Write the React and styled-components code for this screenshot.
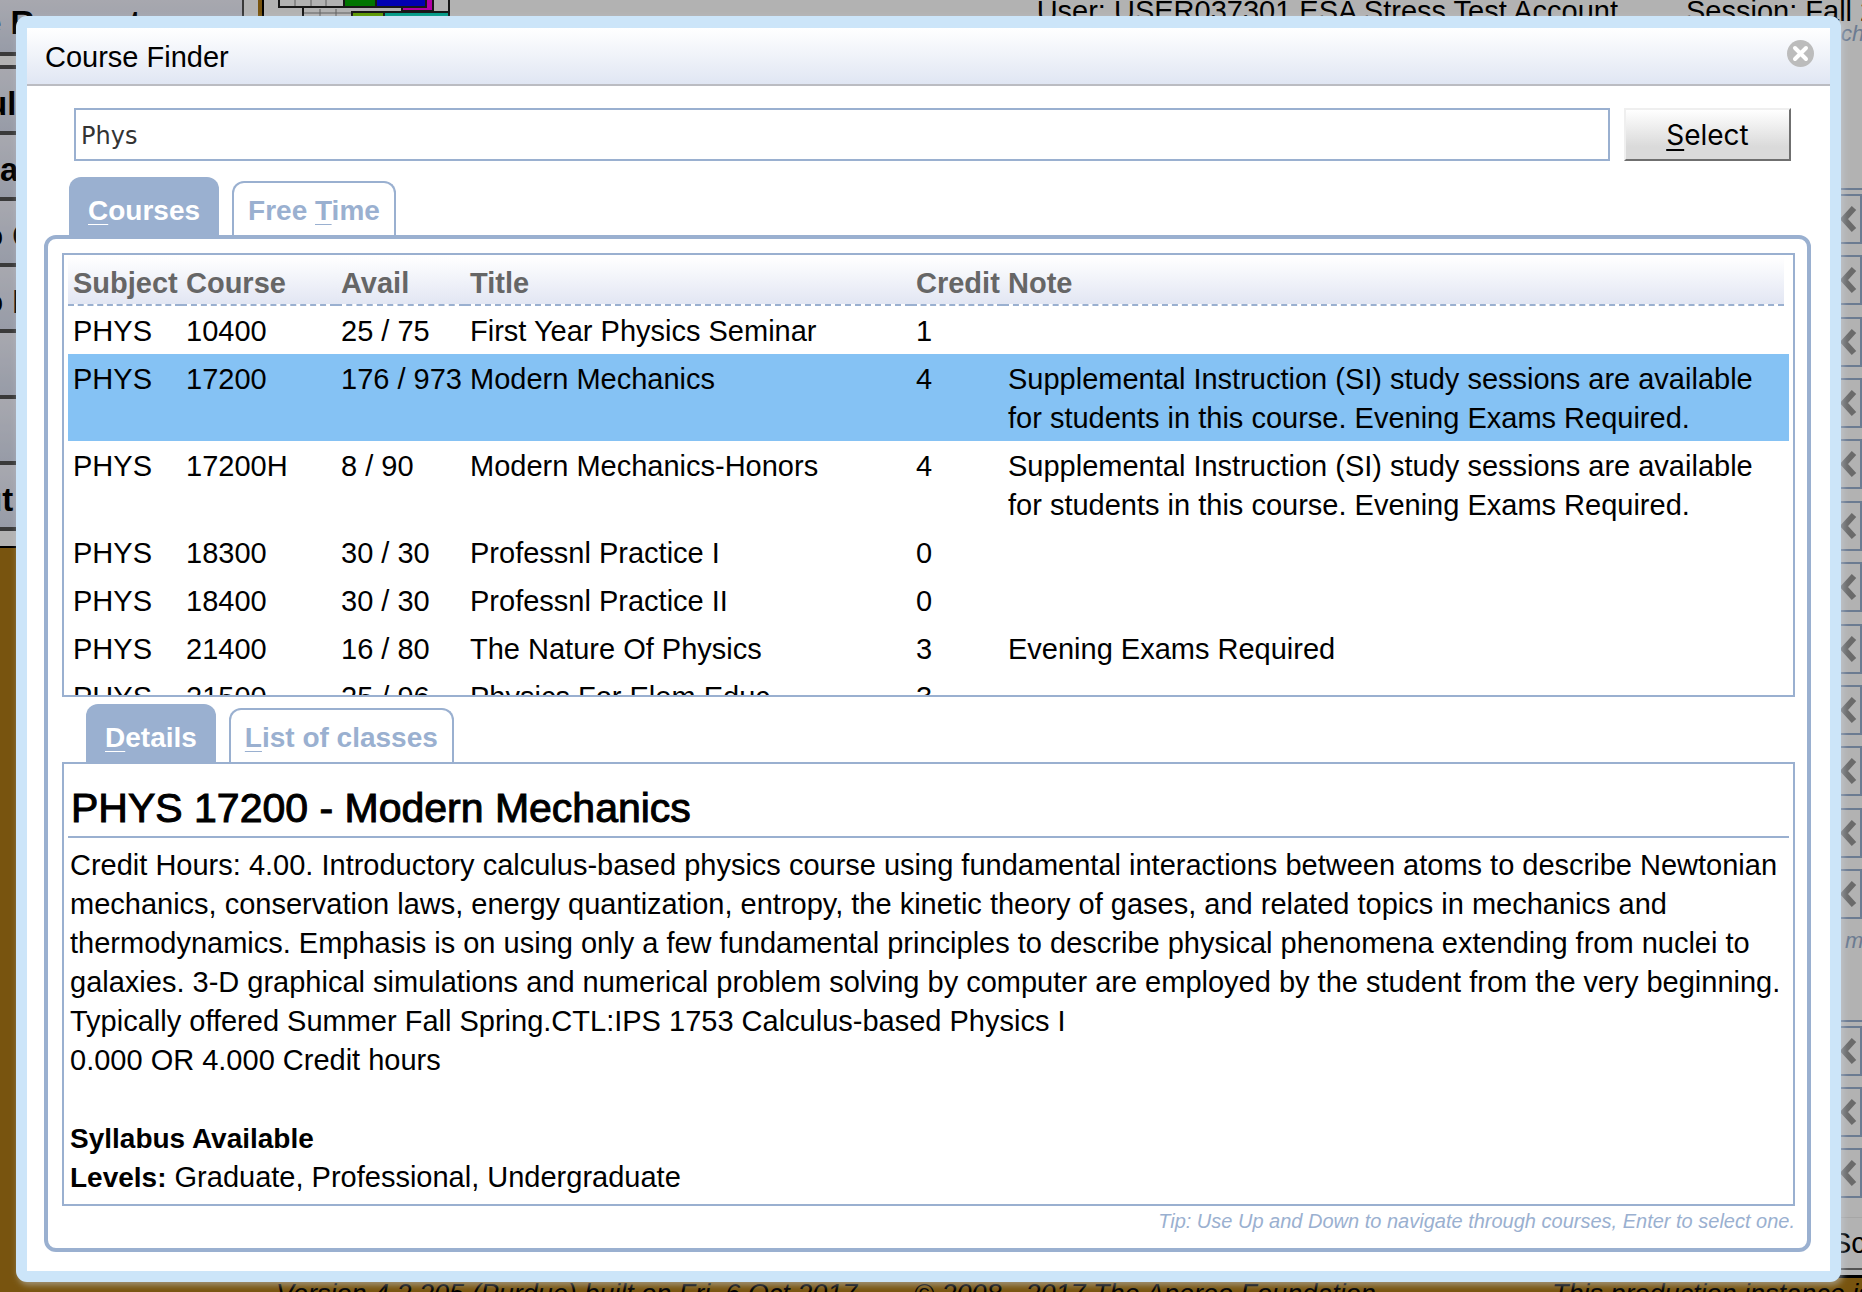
import React, { useState } from "react";
import styled, { createGlobalStyle } from "styled-components";

const blue = "#9ab0d0";
const sans = `"Liberation Sans", Arial, Helvetica, sans-serif`;

const GlobalStyle = createGlobalStyle`
  *, *::before, *::after { box-sizing: border-box; }
  body {
    margin: 0;
    height: 100vh;
    overflow: hidden;
    background: #ac7916;
    font: 29px/39px ${sans};
    color: #000;
  }
  button, input { font-family: inherit; color: inherit; margin: 0; }
`;

/* ---------- page behind the dialog ---------- */

const Page = styled.div`
  display: flex;
  height: 100vh;
  overflow: hidden;
`;

const Sidebar = styled.nav`
  flex: none;
  width: 258px;
  height: 548px;
  overflow: hidden;
  background: #fff;
  border-bottom: 2px solid #000;
`;

const MenuGroup = styled.div`
  width: 304px;
  margin: 0 0 9px -60px;
  border-right: 2px solid #535353;
`;

const MenuButton = styled.button`
  display: block;
  width: 100%;
  height: ${(p) => (p.$first ? 56 : p.$top ? 70 : 66)}px;
  padding: ${(p) => (p.$first ? "0 0 7px" : "7px 0 0")};
  padding-left: ${(p) => p.$start}px;
  border: 0 solid #535353;
  border-bottom-width: 4px;
  border-top-width: ${(p) => (p.$top ? 4 : 0)}px;
  background: linear-gradient(#f0f1fb, #d9dff0);
  font-size: 33px;
  font-weight: 700;
  line-height: 40px;
  text-align: left;
  white-space: nowrap;
`;

const Content = styled.div`
  flex: 1;
  min-width: 0;
  display: flex;
  flex-direction: column;
  margin-left: 4px;
`;

const Sheet = styled.main`
  flex: none;
  display: flex;
  flex-direction: column;
  padding: 0 0 5px 14px;
  background: #fff;
  border: 2px solid #000;
  border-width: 0 0 3px 2px;
`;

const Banner = styled.header`
  display: flex;
  align-items: flex-start;
  height: 22px;
  white-space: nowrap;
`;

const Logo = styled.svg`
  flex: none;
  display: block;
`;

const UserName = styled.span`
  margin: -8px 68px 0 auto;
`;

const Session = styled.span`
  flex: none;
  width: 176px;
  margin-top: -8px;
  overflow: hidden;
`;

const SideNote = styled.p`
  align-self: flex-end;
  width: ${(p) => p.$width}px;
  height: 24px;
  margin: ${(p) => p.$above || 0}px 0 0;
  overflow: hidden;
  color: ${blue};
  font-size: 22px;
  line-height: 24px;
  font-style: italic;
  white-space: nowrap;
`;

const RequestList = styled.section`
  display: flex;
  flex-direction: column;
  align-items: flex-end;
  justify-content: space-between;
  height: ${(p) => p.$height}px;
  margin-top: ${(p) => p.$above}px;
  padding-top: 4px;
  border-top: 2px solid ${blue};
`;

const MoveButton = styled.button`
  display: flex;
  align-items: center;
  justify-content: flex-end;
  width: 60px;
  height: 50px;
  padding: 0 3px 0 0;
  border: 2px solid ${blue};
  background: #fff;
`;

const NextSection = styled.div`
  height: 53px;
  margin-top: 19px;
  padding-top: 6px;
  border-top: 1px solid #eee;
  border-bottom: 2px solid #777;
  text-align: right;
  white-space: nowrap;
`;

const ScheduleText = styled.span`
  display: inline-block;
  width: 30px;
  overflow: hidden;
  text-align: left;
`;

const Footer = styled.footer`
  display: flex;
  gap: 64px;
  padding-left: 14px;
  font-size: 27px;
  line-height: 32px;
  font-style: italic;
  white-space: nowrap;
`;

const FooterText = styled.span`
  flex: none;
  width: ${(p) => p.$width}px;
`;

/* ---------- dialog ---------- */

const Glass = styled.div`
  position: fixed;
  inset: 0;
  display: flex;
  padding: 16px 21px 10px 16px;
  background: rgba(0, 0, 0, 0.3);
`;

const Dialog = styled.section`
  flex: 1;
  min-width: 0;
  display: flex;
  flex-direction: column;
  border: 11px solid #cce5f9;
  border-top-width: 12px;
  border-radius: 11px;
  background: #cce5f9;
  box-shadow: 2px 3px 6px rgba(205, 215, 230, 0.5);
`;

const Caption = styled.header`
  display: flex;
  align-items: center;
  justify-content: space-between;
  height: 58px;
  padding: 0 16px 5px 18px;
  border-bottom: 2px solid #bbbcc2;
  background: linear-gradient(#ffffff, #e0e6f3);
`;

const Title = styled.h1`
  margin: 0;
  padding-top: 7px;
  font-size: 29px;
  line-height: 39px;
  font-weight: 400;
`;

const CloseButton = styled.button`
  display: block;
  padding: 0;
  border: 0;
  background: none;
  line-height: 0;
`;

const Body = styled.div`
  flex: 1;
  min-height: 0;
  display: flex;
  flex-direction: column;
  padding: 22px 19px 19px 17px;
  background: #fff;
`;

const SearchRow = styled.form`
  display: flex;
  gap: 14px;
  padding: 0 20px 0 30px;
  margin-bottom: 16px;
`;

const SearchInput = styled.input`
  flex: 1;
  min-width: 0;
  height: 53px;
  padding: 2px 5px 0;
  border: 2px solid ${blue};
  border-radius: 0;
  outline: 0;
  background: #fff;
  && { font-family: "DejaVu Sans", Verdana, sans-serif; color: #333; }
  font-size: 24px;
`;

const SelectButton = styled.button`
  width: 167px;
  height: 53px;
  padding: 2px 0 0;
  border: 2px solid;
  border-color: #efefef #6f6f6f #6f6f6f #efefef;
  background: linear-gradient(#ffffff, #dadada 75%);
  && { font-family: Inter, "Liberation Sans", sans-serif; }
  font-size: 28px;
  line-height: 39px;
`;

const Key = styled.u`
  text-decoration-thickness: ${(p) => p.$weight || 1}px;
  text-underline-offset: 4px;
  text-decoration-skip-ink: none;
`;

const TabBar = styled.div`
  display: flex;
  align-items: flex-end;
  gap: 13px;
  height: 58px;
  padding-left: ${(p) => p.$indent}px;
`;

const Tab = styled.button`
  height: ${(p) => (p.$active ? 58 : 54)}px;
  padding: ${(p) => (p.$active ? "8px 19px 0" : "3px 14px 0")};
  border: solid ${blue};
  border-width: ${(p) => (p.$active ? 0 : "2px 2px 0")};
  border-radius: 12px 12px 0 0;
  background: ${(p) => (p.$active ? blue : "#fff")};
  color: ${(p) => (p.$active ? "#fff" : blue)} !important;
  font-size: 28px;
  font-weight: 700;
  line-height: 39px;
  white-space: nowrap;
`;

const Panel = styled.div`
  flex: 1;
  min-height: 0;
  display: flex;
  flex-direction: column;
  padding: 14px 12px 4px 14px;
  border: 4px solid ${blue};
  border-radius: 12px;
`;

const Box = styled.div`
  flex: 1 1 0;
  min-height: 0;
  overflow: hidden;
  padding: 0 4px;
  border: 2px solid ${blue};
  background: #fff;
`;

const Spacer = styled.div`
  flex: none;
  height: 7px;
`;

const Table = styled.table`
  width: 100%;
  margin-top: 2px;
  table-layout: fixed;
  border-collapse: separate;
  border-spacing: 0;
`;

const Col = styled.col`
  width: ${(p) => (p.$width ? `${p.$width}px` : "auto")};
`;

const Th = styled.th`
  height: 49px;
  padding: 7px 4px 1px 5px;
  border-bottom: 2px dashed ${blue};
  background: linear-gradient(#ffffff, #e2e6f3);
  color: #666;
  font-weight: 700;
  text-align: left;
  white-space: nowrap;
`;

const EndTh = styled.th`
  padding: 0;
`;

const Row = styled.tr`
  background: ${(p) => (p.$selected ? "#85c2f4" : "transparent")};
`;

const Td = styled.td`
  padding: 6px 0 3px 5px;
  vertical-align: top;
`;

const Heading = styled.h2`
  margin: 0;
  padding: 22px 3px 5px;
  border-bottom: 2px solid ${blue};
  font-size: 41px;
  line-height: 45px;
  font-weight: 400;
  -webkit-text-stroke: 1px #000;
`;

const Details = styled.div`
  padding: 8px 2px 0;
`;

const Paragraph = styled.p`
  margin: 0 0 ${(p) => (p.$gap ? 39 : 0)}px;
`;

const Strong = styled.strong`
  font-size: 28px;
`;

const Tip = styled.p`
  margin: 0;
  height: 38px;
  padding-top: 2px;
  color: ${blue};
  font-size: 20px;
  line-height: 26px;
  font-style: italic;
  text-align: right;
`;

const MENU = [
  { text: "ul", start: 47 },
  { text: "a", start: 60 },
  { text: "o C", start: 43 },
  { text: "o D", start: 43 },
  { text: "", start: 43 },
  { text: "", start: 43 },
  { text: "ut", start: 42 },
];

const SI =
  "Supplemental Instruction (SI) study sessions are available for students in this course. Evening Exams Required.";

const COURSES = [
  ["PHYS", "10400", "25 / 75", "First Year Physics Seminar", "1", ""],
  ["PHYS", "17200", "176 / 973", "Modern Mechanics", "4", SI],
  ["PHYS", "17200H", "8 / 90", "Modern Mechanics-Honors", "4", SI],
  ["PHYS", "18300", "30 / 30", "Professnl Practice I", "0", ""],
  ["PHYS", "18400", "30 / 30", "Professnl Practice II", "0", ""],
  ["PHYS", "21400", "16 / 80", "The Nature Of Physics", "3", "Evening Exams Required"],
  ["PHYS", "21500", "25 / 96", "Physics For Elem Educ", "3", ""],
];

function Chevron() {
  return (
    <svg width="16" height="28" viewBox="0 0 16 28" aria-hidden="true">
      <path d="M13 3 L3 14 L13 25" fill="none" stroke="#999" strokeWidth="6" />
    </svg>
  );
}

function TimetableLogo() {
  return (
    <Logo width="174" height="22" viewBox="0 0 174 22" aria-hidden="true">
      <path d="M17 0V7M33 0V7M48 0V7M42 9V22M58 9V22M25 13H74" stroke="#888" strokeWidth="1" />
      <g stroke="#222" strokeWidth="2">
        <path d="M1 0V7H66M25 7V22M171 0V12" fill="none" />
        <rect x="124" y="-8" width="31" height="19" fill="#ff00ef" />
        <rect x="66" y="-8" width="32" height="15" fill="#00a800" />
        <rect x="98" y="-8" width="50" height="15" fill="#0000ff" />
        <rect x="74" y="12" width="32" height="16" fill="#82d900" />
        <rect x="106" y="12" width="65" height="16" fill="#00dcc0" />
      </g>
    </Logo>
  );
}

function MoveButtons({ count }) {
  return Array.from({ length: count }, (_, i) => (
    <MoveButton key={i} type="button" aria-label="Remove">
      <Chevron />
    </MoveButton>
  ));
}

function Background() {
  return (
    <Page>
      <Sidebar>
        <MenuGroup>
          <MenuButton $first $start={43} type="button">e Requests</MenuButton>
        </MenuGroup>
        <MenuGroup>
          {MENU.map((m, i) => (
            <MenuButton key={i} $top={i === 0} $start={m.start} type="button">{m.text}</MenuButton>
          ))}
        </MenuGroup>
      </Sidebar>
      <Content>
        <Sheet>
          <Banner>
            <TimetableLogo />
            <UserName>User: USER037301 ESA Stress Test Account</UserName>
            <Session>Session: Fall 2017</Session>
          </Banner>
          <SideNote $width={21}>change</SideNote>
          <RequestList $above={142} $height={731}><MoveButtons count={12} /></RequestList>
          <SideNote $width={17} $above={10}>more</SideNote>
          <RequestList $above={67} $height={178}><MoveButtons count={3} /></RequestList>
          <NextSection><ScheduleText>Schedule</ScheduleText></NextSection>
        </Sheet>
        <Footer>
          <FooterText $width={574}>Version 4.2.205 (Purdue) built on Fri, 6 Oct 2017</FooterText>
          <FooterText $width={574}>© 2008 - 2017 The Apereo Foundation</FooterText>
          <FooterText $width={320}>This production instance is</FooterText>
        </Footer>
      </Content>
    </Page>
  );
}

export default function App() {
  const [query, setQuery] = useState("Phys");
  const [selected, setSelected] = useState(1);
  return (
    <>
      <GlobalStyle />
      <Background />
      <Glass>
        <Dialog role="dialog" aria-label="Course Finder">
          <Caption>
            <Title>Course Finder</Title>
            <CloseButton type="button" aria-label="Close">
              <svg width="27" height="27" viewBox="0 0 27 27" aria-hidden="true">
                <circle cx="13.5" cy="13.5" r="13.5" fill="#bcbcbc" />
                <path d="M8 8 L19 19 M19 8 L8 19" stroke="#fff" strokeWidth="4" strokeLinecap="round" />
              </svg>
            </CloseButton>
          </Caption>
          <Body>
            <SearchRow onSubmit={(e) => e.preventDefault()}>
              <SearchInput
                type="text"
                aria-label="Course"
                value={query}
                onChange={(e) => setQuery(e.target.value)}
              />
              <SelectButton type="submit"><Key $weight={2}>S</Key>elect</SelectButton>
            </SearchRow>
            <TabBar $indent={25} role="tablist">
              <Tab $active type="button" role="tab" aria-selected="true"><Key>C</Key>ourses</Tab>
              <Tab type="button" role="tab" aria-selected="false">Free <Key>T</Key>ime</Tab>
            </TabBar>
            <Panel>
              <Box>
                <Table>
                  <colgroup>
                    <Col $width={113} />
                    <Col $width={155} />
                    <Col $width={129} />
                    <Col $width={446} />
                    <Col $width={92} />
                    <Col />
                    <Col $width={5} />
                  </colgroup>
                  <thead>
                    <tr>
                      {["Subject", "Course", "Avail", "Title", "Credit", "Note"].map((h) => (
                        <Th key={h} scope="col">{h}</Th>
                      ))}
                      <EndTh aria-hidden="true" />
                    </tr>
                  </thead>
                  <tbody>
                    {COURSES.map((c, i) => (
                      <Row key={c[1]} $selected={i === selected} onClick={() => setSelected(i)}>
                        {c.map((v, j) => <Td key={j}>{v}</Td>)}
                        <Td />
                      </Row>
                    ))}
                  </tbody>
                </Table>
              </Box>
              <Spacer />
              <TabBar $indent={24} role="tablist">
                <Tab $active type="button" role="tab" aria-selected="true"><Key>D</Key>etails</Tab>
                <Tab type="button" role="tab" aria-selected="false"><Key>L</Key>ist of classes</Tab>
              </TabBar>
              <Box>
                <Heading>PHYS 17200 - Modern Mechanics</Heading>
                <Details>
                  <Paragraph $gap>
                    Credit Hours: 4.00. Introductory calculus-based physics course using fundamental interactions between atoms to describe Newtonian mechanics, conservation laws, energy quantization, entropy, the kinetic theory of gases, and related topics in mechanics and thermodynamics. Emphasis is on using only a few fundamental principles to describe physical phenomena extending from nuclei to galaxies. 3-D graphical simulations and numerical problem solving by computer are employed by the student from the very beginning. Typically offered Summer Fall Spring.CTL:IPS 1753 Calculus-based Physics I
                    <br />
                    0.000 OR 4.000 Credit hours
                  </Paragraph>
                  <Paragraph><Strong>Syllabus Available</Strong></Paragraph>
                  <Paragraph><Strong>Levels:</Strong> Graduate, Professional, Undergraduate</Paragraph>
                </Details>
              </Box>
              <Tip>Tip: Use Up and Down to navigate through courses, Enter to select one.</Tip>
            </Panel>
          </Body>
        </Dialog>
      </Glass>
    </>
  );
}
